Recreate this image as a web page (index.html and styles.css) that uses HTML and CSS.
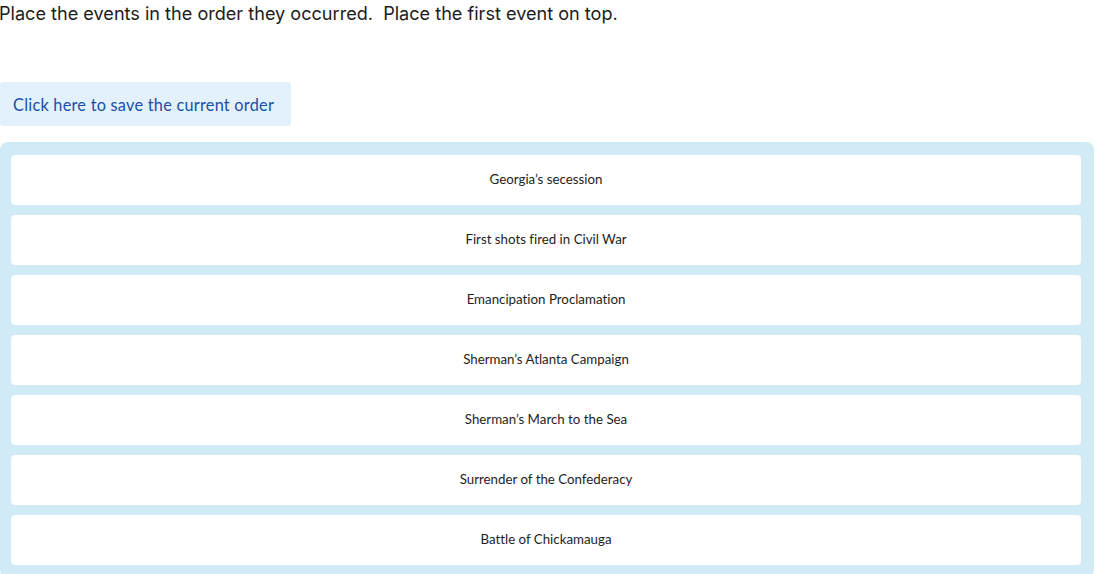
FILE: index.html
```html
<!DOCTYPE html>
<html lang="en">
<head>
  <meta charset="UTF-8">
  <meta name="viewport" content="width=device-width, initial-scale=1.0">
  <title>Order the events</title>
  <link rel="stylesheet" href="styles.css">
</head>
<body>
  <p class="prompt">Place the events in the order they occurred.&nbsp; Place the first event on top.</p>

  <button type="button" class="save-btn">Click here to save the current order</button>

  <ul class="sort-list">
    <li class="sort-item">Georgia’s secession</li>
    <li class="sort-item">First shots fired in Civil War</li>
    <li class="sort-item">Emancipation Proclamation</li>
    <li class="sort-item">Sherman’s Atlanta Campaign</li>
    <li class="sort-item">Sherman’s March to the Sea</li>
    <li class="sort-item">Surrender of the Confederacy</li>
    <li class="sort-item">Battle of Chickamauga</li>
  </ul>
</body>
</html>
```

FILE: styles.css
```css
body {
  margin: 0;
  width: 1094px;
  background: #ffffff;
  font-family: Lato, "Liberation Sans", sans-serif;
  font-variant-ligatures: none;
}

.prompt {
  margin: 0 0 0 -1px;
  padding-top: 2px;
  height: 82px;
  font-family: Inter, "Open Sans", sans-serif;
  font-size: 18.1px;
  line-height: 22px;
  color: #1c1c1c;
  box-sizing: border-box;
}

.save-btn {
  display: block;
  margin: 0;
  height: 44px;
  width: 291px;
  padding: 0 13px;
  text-align: left;
  background: #e3f1fc;
  border: none;
  border-radius: 3px;
  color: #1b4fa6;
  font-family: Lato, sans-serif;
  font-size: 16.3px;
  letter-spacing: 0.25px;
  font-variant-ligatures: none;
  cursor: pointer;
}

.sort-list {
  list-style: none;
  margin: 16px 0 0;
  padding: 13px 13px 13px 11px;
  background: #d0ebf6;
  border-radius: 8px;
  display: flex;
  flex-direction: column;
  gap: 10px;
}

.sort-item {
  height: 50px;
  padding-bottom: 2px;
  box-sizing: border-box;
  background: #ffffff;
  border-radius: 4px;
  display: flex;
  align-items: center;
  justify-content: center;
  font-size: 13.3px;
  color: #1e1e1e;
}
```
